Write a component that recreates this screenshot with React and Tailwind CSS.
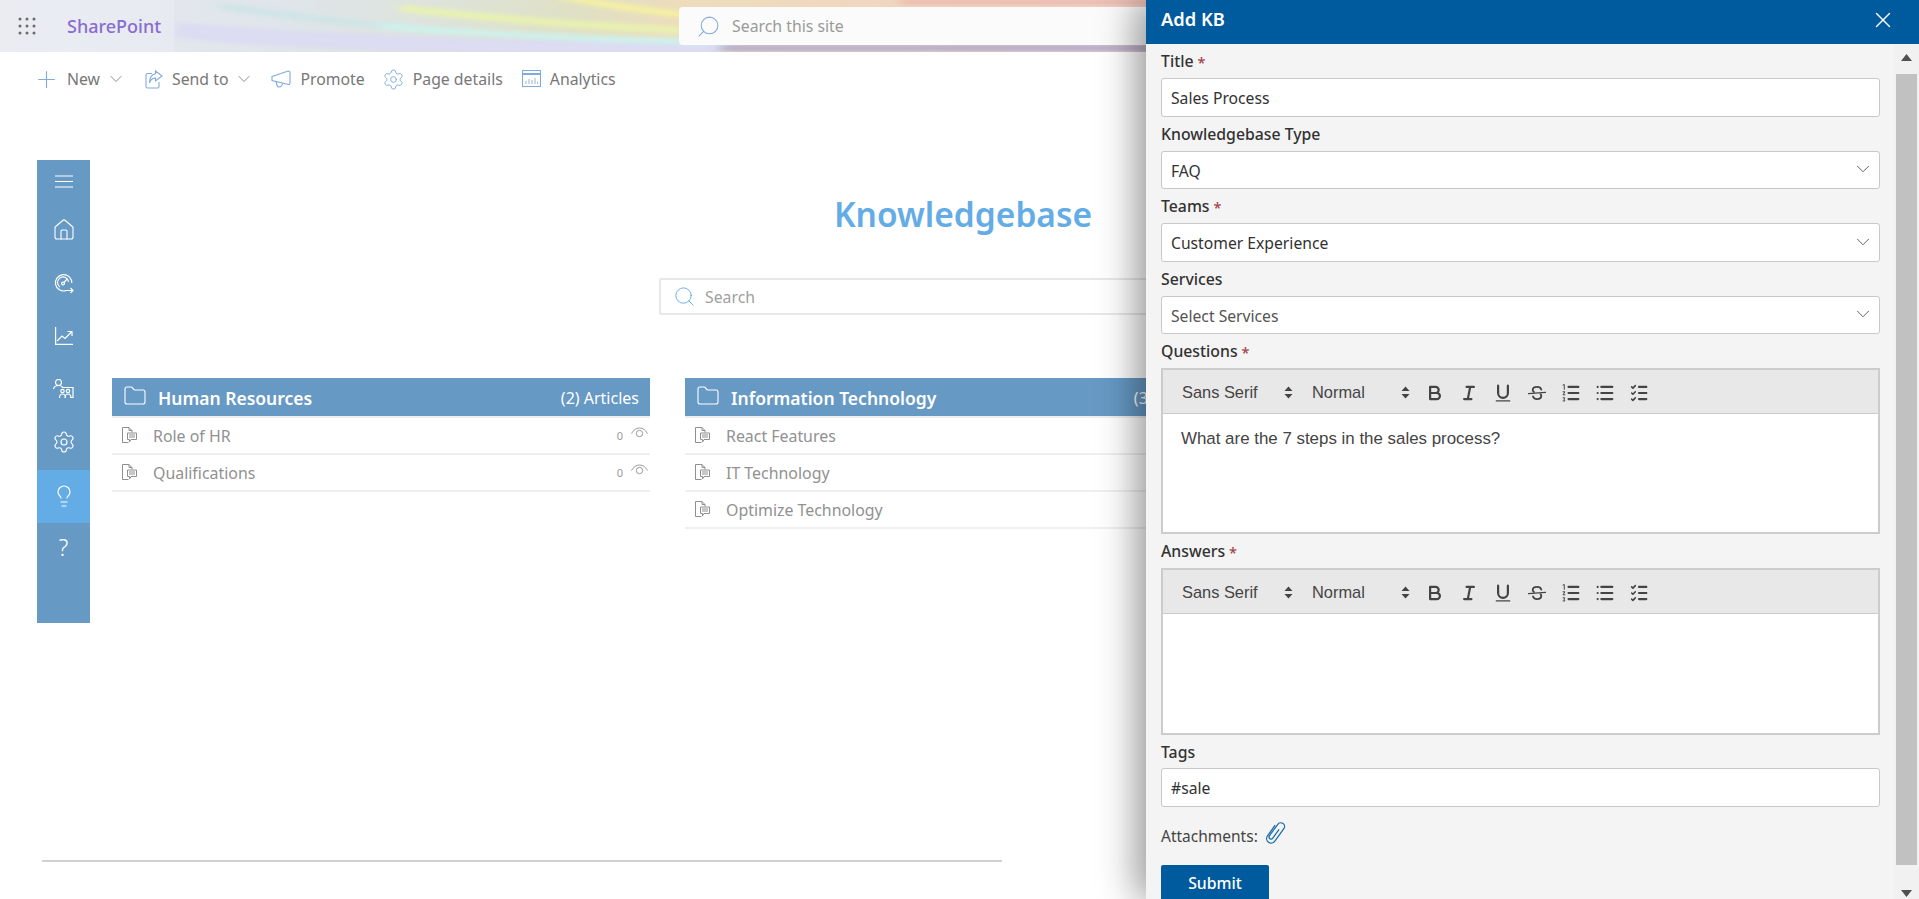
import { Plus, ChevronDown, Settings, Search, Home, Lightbulb, X, Folder } from "lucide-react";

const ui = "font-['Noto_Sans','Open_Sans',sans-serif]";

function Banner() {
  return (
    <svg className="absolute inset-0 w-full h-full" viewBox="0 0 1919 52" preserveAspectRatio="none">
      <defs>
        <linearGradient id="base" x1="0" x2="1" y1="0" y2="0">
          <stop offset="0" stopColor="#e8eaf1" />
          <stop offset="0.15" stopColor="#dfe5ea" />
          <stop offset="0.23" stopColor="#dde3da" />
          <stop offset="0.3" stopColor="#dfe0c4" />
          <stop offset="0.36" stopColor="#eedcbc" />
          <stop offset="0.6" stopColor="#f3cfc4" />
        </linearGradient>
        <filter id="blur" filterUnits="userSpaceOnUse" x="0" y="-20" width="1919" height="92">
          <feGaussianBlur stdDeviation="6 2" />
        </filter>
      </defs>
      <rect width="1919" height="52" fill="url(#base)" />
      <g filter="url(#blur)" fill="none">
        <path d="M175 30 C 300 42, 500 48, 720 52" stroke="#dcdcf2" strokeWidth="16" />
        <path d="M560 -4 C 620 8, 670 14, 720 18" stroke="#f6f2a0" strokeWidth="6" />
        <path d="M400 8 C 520 22, 620 28, 720 32" stroke="#e8f2b0" strokeWidth="7" />
        <path d="M220 6 C 290 16, 340 22, 400 27" stroke="#cfe4e6" strokeWidth="7" />
        <path d="M380 26 C 480 34, 600 40, 730 42" stroke="#cdf2ec" strokeWidth="6" />
        <path d="M720 48 C 900 48, 1000 48, 1200 48" stroke="#b6aecf" strokeWidth="7" />
        <path d="M900 2 L 1200 2" stroke="#e7b4aa" strokeWidth="4" />
      </g>
      <rect width="174" height="52" fill="#eef0f5" fillOpacity="0.4" />
    </svg>
  );
}

function Waffle() {
  const cells = [];
  for (let y = 2; y <= 16; y += 7) for (let x = 2; x <= 16; x += 7) cells.push([x, y]);
  return (
    <svg width="18" height="18" viewBox="0 0 18 18" fill="#6b6b6b">
      {cells.map(([x, y]) => <circle key={`${x}${y}`} cx={x} cy={y} r="1.5" />)}
    </svg>
  );
}

function ShareIcon() {
  return (
    <svg width="18" height="19" viewBox="0 0 18 19" fill="none" stroke="#7fabdd" strokeWidth="1.1">
      <path d="M7 3.500H2.500A1.500 1.500 0 0 0 1 5v11.500A1.500 1.500 0 0 0 2.500 18h10a1.500 1.500 0 0 0 1.500-1.500V12" />
      <path d="M10.500 1l6.500 5-6.500 5V8C7.500 8 5.500 10 4.500 13c0-5 2-8.500 6-9.200z" />
    </svg>
  );
}

function MegaphoneIcon() {
  return (
    <svg width="20" height="19" viewBox="0 0 20 19" fill="none" stroke="#7fabdd" strokeWidth="1.1">
      <path d="M1 6.500L16.500 1.200Q19 .6 19 3v9.500Q19 15 16.500 14.300L1 10.500z" />
      <path d="M5 11.500l1 4c.5 2 3.500 2 4.500.3L12 13.500" />
    </svg>
  );
}

function AnalyticsIcon() {
  return (
    <svg width="19" height="18" viewBox="0 0 19 18" fill="none" stroke="#7fabdd" strokeWidth="1.1">
      <rect x="0.500" y="0.500" width="18" height="16" />
      <path d="M0.500 4h18" strokeWidth="2" />
      <path d="M4 14v-3M7 14V9M10 14v-4M13 14V8M15.500 14v-2" stroke="#a9b8cc" />
    </svg>
  );
}

function HamburgerIcon() {
  return (
    <svg width="18" height="13" viewBox="0 0 18 13" stroke="#fff" strokeWidth="1.1">
      <path d="M0 1h18M0 6.500h18M0 12h18" />
    </svg>
  );
}

function GaugeIcon() {
  return (
    <svg width="20" height="20" viewBox="0 0 20 20" fill="none" stroke="#fff" strokeWidth="1.2">
      <path d="M12 17.600A8.200 8.200 0 1 1 17.800 10" />
      <path d="M6 14A5.500 5.500 0 1 1 14.500 9" />
      <circle cx="9" cy="10.500" r="1.400" />
      <path d="M10 9.500l3-3.500M11 17.500h8M16.500 15l2.500 2.500-2.500 2.500" />
    </svg>
  );
}

function ChartIcon() {
  return (
    <svg width="18" height="18" viewBox="0 0 18 18" fill="none" stroke="#fff" strokeWidth="1.2">
      <path d="M0.600 0v17.400H18" />
      <path d="M2 14l5-5 3 2.500L16.500 5M12.500 4.500h4.500V9" />
    </svg>
  );
}

function PeopleIcon() {
  return (
    <svg width="21" height="20" viewBox="0 0 21 20" fill="none" stroke="#fff" strokeWidth="1.2">
      <circle cx="5.500" cy="3.500" r="3" />
      <path d="M0.500 10c.5-2.500 2.500-3.500 5-3.500 2 0 3 .5 4 1.500" />
      <path d="M9 8.500h11v10h-3" />
      <circle cx="9.500" cy="12" r="1.700" />
      <circle cx="15" cy="12" r="1.700" />
      <path d="M6.500 19c0-2.500 1-4 3-4s3 1.500 3 4M12 19c0-2.500 1-4 3-4s3 1.500 3 4" />
    </svg>
  );
}

function DocIcon() {
  return (
    <svg width="15" height="16" viewBox="0 0 15 16" fill="none" stroke="#8f8f8f" strokeWidth="1">
      <path d="M6.500 15.500H.5V.5H7l3 3v2" />
      <path d="M7 .5v3h3" />
      <path d="M5.500 6h9v6.500H9l-1.500 2.500v-2.500h-2z" />
      <path d="M7 8h6M7 10h6" />
    </svg>
  );
}

function EyeIcon() {
  return (
    <svg width="17" height="13" viewBox="0 0 17 13" fill="none" stroke="#9a9a9a" strokeWidth="1">
      <path d="M.5 6.500C2.500 3 5 1 8.500 1s6 2 8 5.500" />
      <circle cx="8.500" cy="6.500" r="3.200" />
    </svg>
  );
}

function ClipIcon() {
  return (
    <svg width="25" height="25" viewBox="0 0 22 22" fill="none" stroke="#1a6ca8" strokeWidth="1.100" className="-mt-[9px]">
      <g transform="rotate(36 11 11)">
        <path d="M7 6v11.500a4 4 0 0 0 8 0V4a3.300 3.300 0 0 0-6.600 0v12.500a1.800 1.800 0 0 0 3.600 0V7" />
      </g>
    </svg>
  );
}

function Updown() {
  return (
    <svg width="9" height="13" viewBox="0 0 9 13" fill="#444">
      <path d="M4.500 0.500L8.500 5H.5zM4.500 12.500L.5 8h8z" />
    </svg>
  );
}

function ToolIcon({ children }) {
  return (
    <span className="w-[34px] flex justify-center">
      <svg width="22" height="22" viewBox="0 0 18 18" fill="none" stroke="#444" strokeWidth="1.800" strokeLinecap="round" strokeLinejoin="round">
        {children}
      </svg>
    </span>
  );
}

function Toolbar() {
  return (
    <div className="h-[45px] bg-[#e8e8e8] border-2 border-[#ccc] border-b-0 flex items-center pl-[19px] pt-[2px] font-['Liberation_Sans',sans-serif] text-[16.400px] text-[#444]">
      <div className="w-[130px] pr-[19px] flex items-center justify-between"><span>Sans Serif</span><Updown /></div>
      <div className="w-[106px] pr-[8px] flex items-center justify-between"><span>Normal</span><Updown /></div>
      <ToolIcon>
        <path d="M5,4H9.500A2.500,2.500,0,0,1,12,6.500v0A2.500,2.500,0,0,1,9.500,9H5V4Z" />
        <path d="M5,9h5.500A2.500,2.500,0,0,1,13,11.500v0A2.500,2.500,0,0,1,10.500,14H5V9Z" />
      </ToolIcon>
      <ToolIcon>
        <path d="M7 4h6M5 14h6M8 14l2-10" />
      </ToolIcon>
      <ToolIcon>
        <path d="M5,3V9a4,4,0,0,0,4,4h0a4,4,0,0,0,4-4V3" />
        <rect x="3" y="15" width="12" height="1" rx="0.500" fill="#444" stroke="none" />
      </ToolIcon>
      <ToolIcon>
        <path d="M16 8.500L2 9.500" strokeWidth="0.900" />
        <path d="M12.500 6.200C12.200 4.600 10.600 4 9 4 7.200 4 5.500 4.900 5.500 6.500c0 .8.400 1.300 1 1.700M5.800 11.800C6.100 13.400 7.400 14 9 14c1.800 0 3.500-.8 3.500-2.500 0-.6-.200-1-.5-1.400" strokeWidth="1.500" />
      </ToolIcon>
      <ToolIcon>
        <path d="M7 4h8M7 9h8M7 14h8" />
        <path d="M2.500 2.500l1-.5v4M2.500 8h1.500l-1.500 2.500H4M2.500 13h1.500l-.7 1 .7 1.500H2.500" strokeWidth="0.800" />
      </ToolIcon>
      <ToolIcon>
        <path d="M6 4h9M6 9h9M6 14h9M3 4h0M3 9h0M3 14h0" />
      </ToolIcon>
      <ToolIcon>
        <path d="M9 4h6M9 9h6M9 14h6" />
        <path d="M3 4l1 1 2-2M3 9l1 1 2-2M3 14l1 1 2-2" strokeWidth="1.300" />
      </ToolIcon>
    </div>
  );
}

function Editor({ children, h }) {
  return (
    <div>
      <Toolbar />
      <div className={`${h} bg-white border-2 border-[#ccc] border-t pl-[18px] pt-[13px] font-['Liberation_Sans',sans-serif] text-[16.900px] leading-[24px] text-[#444]`}>
        {children}
      </div>
    </div>
  );
}

function Label({ children, required, h = "h-[34px]" }) {
  return (
    <div className={`${h} flex items-center gap-1 pt-[2px] text-[15.800px] font-medium text-[#323232] leading-none`}>
      <span>{children}</span>
      {required && <span className="text-[14.500px] text-[#a4454c]">*</span>}
    </div>
  );
}

function Field({ value, select, muted, h = "h-[39px]" }) {
  return (
    <div className={`${h} bg-white border border-[#c8c8c8] rounded-[3px] flex items-center justify-between pl-[9px] pr-[5px] pt-[3px] text-[15.700px] ${muted ? "text-[#555]" : "text-[#323232]"}`}>
      <span>{value}</span>
      {select && <ChevronDown size={22} strokeWidth={1} color="#555" className="-mt-[5px]" />}
    </div>
  );
}

function Category({ name, count, items, views }) {
  return (
    <div>
      <div className="h-[40px] bg-[#6699c4] border-b-2 border-[#eee] flex items-center justify-between pl-[11px] pr-[11px] text-white box-border">
        <div className="flex items-center gap-[11px]">
          <Folder size={24} strokeWidth={1.100} className="-mt-[2px]" />
          <span className="text-[17.500px] font-semibold pt-[2px]">{name}</span>
        </div>
        <span className="text-[16px] pt-[2px]">({count}) Articles</span>
      </div>
      {items.map((item) => (
        <div key={item} className="h-[37px] border-b-2 border-[#efefef] flex items-center justify-between pl-[10px] pr-[2px] box-border">
          <div className="flex items-center gap-[16px] text-[15.900px] text-[#919191]">
            <DocIcon />
            <span className="pt-[3px]">{item}</span>
          </div>
          {views && (
            <div className="flex items-center gap-[8px] text-[11px] text-[#999]">
              <span className="mt-[2px]">0</span>
              <span className="-mt-[5px]"><EyeIcon /></span>
            </div>
          )}
        </div>
      ))}
    </div>
  );
}

const navIcons = [
  <Home size={24} strokeWidth={1.100} />,
  <GaugeIcon />,
  <ChartIcon />,
  <PeopleIcon />,
  <Settings size={24} strokeWidth={1.100} />,
];

export default function App() {
  return (
    <div className={`relative h-[899px] overflow-hidden bg-white ${ui}`}>
      <header className="relative h-[52px]">
        <Banner />
        <div className="relative flex items-center h-full">
          <div className="ml-[18px]"><Waffle /></div>
          <span className="ml-[31px] text-[18px] font-medium text-[#8a6cd0]">SharePoint</span>
          <div className="ml-[518px] flex-1 h-[38px] bg-[#fbfbfb] rounded-[4px] flex items-center pl-[17px] gap-[11px] text-[15.800px] text-[#9a9a9a]">
            <Search size={25} strokeWidth={1} color="#7fabdd" className="-scale-x-100" />
            <span className="pt-[1px]">Search this site</span>
          </div>
        </div>
      </header>

      <nav className="h-[54px] flex items-center pl-[33px] text-[15.800px] text-[#777]">
        <Plus size={27} strokeWidth={1} color="#7fabdd" />
        <span className="ml-[7px] pt-[2px]">New</span>
        <ChevronDown size={20} strokeWidth={1} className="ml-[6px]" />
        <span className="ml-[19px]"><ShareIcon /></span>
        <span className="ml-[9px] pt-[2px]">Send to</span>
        <ChevronDown size={20} strokeWidth={1} className="ml-[6px]" />
        <span className="ml-[17px]"><MegaphoneIcon /></span>
        <span className="ml-[9px] pt-[2px]">Promote</span>
        <Settings size={23} strokeWidth={1} color="#7fabdd" className="ml-[17px]" />
        <span className="ml-[8px] pt-[2px]">Page details</span>
        <span className="ml-[19px]"><AnalyticsIcon /></span>
        <span className="ml-[9px] pt-[2px]">Analytics</span>
      </nav>

      <main className="flex pt-[54px] pl-[37px]">
        <aside className="w-[53px] h-[463px] bg-[#6699c4] text-white">
          <div className="h-[45px] flex items-center justify-center pb-[2px]"><HamburgerIcon /></div>
          {navIcons.map((icon, i) => (
            <div key={i} className="h-[53px] flex items-center justify-center pb-[3px]">{icon}</div>
          ))}
          <div className="h-[53px] bg-[#64ace5] flex items-center justify-center pb-[1px]"><Lightbulb size={24} strokeWidth={1.200} /></div>
          <div className="h-[53px] flex items-center justify-center pb-[4px] text-[23px] font-light leading-none">?</div>
        </aside>
        <section className="ml-[22px] w-[1702px]">
          <h1 className="h-[118px] flex items-center justify-center pb-[9px] text-[33.500px] font-semibold text-[#64ace5] leading-none">Knowledgebase</h1>
          <div className="mx-auto w-[608px] h-[37px] border-2 border-[#e8e8e8] rounded-[2px] flex items-center pl-[12px] gap-[9px] text-[15.800px] text-[#a0a0a0]">
            <Search size={23} strokeWidth={1} color="#64ace5" />
            <span className="pt-[3px]">Search</span>
          </div>
          <div className="mt-[63px] grid grid-cols-3 gap-[35px] w-[1684px]">
            <Category name="Human Resources" count={2} items={["Role of HR", "Qualifications"]} views />
            <Category name="Information Technology" count={3} items={["React Features", "IT Technology", "Optimize Technology"]} />
          </div>
        </section>
      </main>

      <div className="mt-[237px] ml-[42px] w-[960px] h-[2px] bg-[#d0d0d0]" />

      <div className="absolute top-0 right-0 w-[773px] h-full bg-[#f4f4f4] shadow-[-10px_0_35px_rgba(0,0,0,0.4)]">
        <div className="h-[44px] bg-[#005a9e] flex items-center justify-between pl-[15px] pr-[23px] pb-[5px] text-white">
          <span className="text-[18.300px] font-semibold -mt-[1px]">Add KB</span>
          <X size={26} strokeWidth={1.300} />
        </div>
        <div className="flex h-[855px]">
          <div className="w-[748px] pl-[15px] pr-[14px] overflow-hidden">
            <Label required>Title</Label>
            <Field value="Sales Process" />
            <Label>Knowledgebase Type</Label>
            <Field value="FAQ" select h="h-[38px]" />
            <Label required>Teams</Label>
            <Field value="Customer Experience" select />
            <Label>Services</Label>
            <Field value="Select Services" select muted h="h-[38px]" />
            <Label required>Questions</Label>
            <Editor h="h-[121px]">What are the 7 steps in the sales process?</Editor>
            <Label required>Answers</Label>
            <Editor h="h-[122px]" />
            <Label h="h-[33px]">Tags</Label>
            <Field value="#sale" />
            <div className="h-[58px] flex items-center gap-[5px] pt-[2px] text-[15.500px] text-[#444]">
              <span>Attachments:</span>
              <ClipIcon />
            </div>
            <button className="w-[108px] h-[37px] bg-[#005a9e] rounded-[2px] text-white text-[15.800px] font-medium">Submit</button>
          </div>
          <div className="w-[25px] bg-[#f1f1f1] flex flex-col items-center">
            <div className="h-[30px] flex items-center justify-center pb-[4px]">
              <svg width="11" height="7" viewBox="0 0 11 7" fill="#505050"><path d="M5.500 0L11 7H0z" /></svg>
            </div>
            <div className="w-[21px] h-[791px] bg-[#c1c1c1]" />
            <div className="flex-1 flex items-end justify-center pb-[2px]">
              <svg width="11" height="7" viewBox="0 0 11 7" fill="#505050"><path d="M5.500 7L0 0h11z" /></svg>
            </div>
          </div>
        </div>
      </div>
    </div>
  );
}
